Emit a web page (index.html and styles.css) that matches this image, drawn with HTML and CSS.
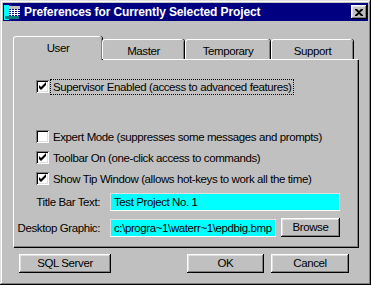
FILE: index.html
```html
<!DOCTYPE html>
<html lang="en">
<head>
    <meta charset="UTF-8">
    <title>Preferences for Currently Selected Project</title>
    <link rel="stylesheet" href="styles.css">
</head>
<body>
    <div class="window">
        <div class="titlebar">
            <svg class="app-icon" width="16" height="16" viewBox="0 0 16 16">
                <rect x="0" y="0" width="16" height="16" fill="#000080"/>
                <rect x="0" y="1" width="5" height="15" fill="#00ffff"/>
                <rect x="5" y="2" width="11" height="3" fill="#c0c0c0"/>
                <rect x="5" y="6" width="11" height="1" fill="#ffffff"/>
                <rect x="5" y="8" width="11" height="1" fill="#ffffff"/>
                <rect x="5" y="10" width="11" height="1" fill="#ffffff"/>
                <rect x="7" y="5" width="1" height="7" fill="#ffffff"/>
                <rect x="10" y="5" width="1" height="7" fill="#ffffff"/>
                <rect x="13" y="5" width="1" height="7" fill="#ffffff"/>
                <rect x="1" y="12" width="14" height="3" fill="#008080"/>
            </svg>
            <span class="title">Preferences for Currently Selected Project</span>
            <div class="close">
                <svg width="8" height="7" viewBox="0 0 8 7">
                    <path d="M0 0h2l2 2 2-2h2v1l-3 2.5 3 2.5v1h-2l-2-2-2 2h-2v-1l3-2.5-3-2.5z" fill="#000"/>
                </svg>
            </div>
        </div>

        <div class="content">
            <div class="tabs">
                <div class="tab active">User</div>
                <div class="tab master">Master</div>
                <div class="tab temporary">Temporary</div>
                <div class="tab support">Support</div>
            </div>

            <div class="panel">
                <div class="check supervisor">
                    <span class="box checked"></span>
                    <span class="label focus">Supervisor Enabled (access to advanced features)</span>
                </div>
                <div class="check expert">
                    <span class="box"></span>
                    <span class="label">Expert Mode (suppresses some messages and prompts)</span>
                </div>
                <div class="check">
                    <span class="box checked"></span>
                    <span class="label">Toolbar On (one-click access to commands)</span>
                </div>
                <div class="check">
                    <span class="box checked"></span>
                    <span class="label">Show Tip Window (allows hot-keys to work all the time)</span>
                </div>

                <div class="field first">
                    <span class="field-label">Title Bar Text:</span>
                    <div class="input wide">Test Project No. 1</div>
                </div>
                <div class="field">
                    <span class="field-label">Desktop Graphic:</span>
                    <div class="input short">c:\progra~1\waterr~1\epdbig.bmp</div>
                    <div class="btn browse">Browse</div>
                </div>
            </div>

            <div class="actions">
                <div class="btn sql">SQL Server</div>
                <div class="btn ok">OK</div>
                <div class="btn cancel">Cancel</div>
            </div>
        </div>
    </div>
</body>
</html>
```

FILE: styles.css
```css
body {
    margin: 0;
    padding: 0;
    background-color: #c0c0c0;
    font-family: "Liberation Sans", Arial, sans-serif;
    font-size: 11.5px;
    letter-spacing: -0.4px;
    color: #000;
}
.window {
    width: 371px;
    height: 285px;
    box-sizing: border-box;
    padding: 3px;
    background-color: #c0c0c0;
    box-shadow: inset -1px -1px #000, inset 1px 1px #dfdfdf,
                inset -2px -2px #808080, inset 2px 2px #fff;
}
.titlebar {
    height: 18px;
    background-color: #000080;
    display: flex;
    align-items: center;
    padding: 0 1px 0 1px;
}
.app-icon {
    flex: none;
}
.title {
    margin-left: 4px;
    color: #fff;
    font-weight: bold;
    font-size: 12px;
    letter-spacing: -0.12px;
    white-space: nowrap;
}
.close {
    margin-left: auto;
    width: 16px;
    height: 14px;
    box-sizing: border-box;
    background-color: #c0c0c0;
    display: flex;
    align-items: center;
    justify-content: center;
    box-shadow: inset -1px -1px #000, inset 1px 1px #fff,
                inset -2px -2px #808080, inset 2px 2px #dfdfdf;
}
.content {
    padding: 15px 0 0 10px;
}
.tabs {
    display: flex;
    align-items: flex-end;
    height: 23px;
    position: relative;
    z-index: 1;
}
.tab {
    box-sizing: border-box;
    height: 20px;
    text-align: center;
    line-height: 19px;
    padding-top: 2px;
    background-color: #c0c0c0;
    border-top: 1px solid #fff;
    border-left: 1px solid #fff;
    border-radius: 3px 3px 0 0;
    box-shadow: inset -1px 0 #808080, 1px 0 #000;
}
.tab.active {
    width: 89px;
    height: 24px;
    margin-bottom: -1px;
    padding-top: 0;
    line-height: 22px;
}
.tab.master {
    width: 82px;
}
.tab.temporary {
    width: 85px;
    margin-left: 1px;
}
.tab.support {
    width: 82px;
    margin-left: 1px;
}
.panel {
    width: 345px;
    height: 188px;
    box-sizing: border-box;
    padding-top: 16px;
    border-top: 1px solid #fff;
    border-left: 1px solid #fff;
    box-shadow: inset -1px -1px #808080, 1px 1px #000;
}
.check {
    display: flex;
    align-items: center;
    height: 21px;
    margin-left: 22px;
}
.check.expert {
    margin-top: 29px;
}
.box {
    flex: none;
    width: 13px;
    height: 13px;
    box-sizing: border-box;
    background-color: #fff;
    box-shadow: inset 1px 1px #808080, inset -1px -1px #fff,
                inset 2px 2px #000, inset -2px -2px #dfdfdf;
}
.box.checked {
    background: #fff url("data:image/svg+xml,%3Csvg xmlns='http://www.w3.org/2000/svg' width='13' height='13'%3E%3Cpath d='M3 5v3l2 2 5-5V2L5 7z' fill='%23000'/%3E%3C/svg%3E") no-repeat;
}
.label {
    margin-left: 2px;
    padding: 1px 2px;
    white-space: nowrap;
}
.focus {
    outline: 1px dotted #000;
}
.field {
    display: flex;
    align-items: center;
    margin-top: 7px;
}
.field.first {
    margin-top: 4px;
}
.field-label {
    width: 86px;
    text-align: right;
    margin-right: 10px;
    white-space: nowrap;
}
.input {
    box-sizing: border-box;
    height: 18px;
    line-height: 16px;
    padding-left: 3px;
    background-color: #00ffff;
    border: 1px solid #fff;
    border-top-color: #dfdfdf;
    border-left-color: #dfdfdf;
    white-space: nowrap;
    overflow: hidden;
}
.input.wide {
    width: 230px;
}
.input.short {
    width: 166px;
}
.btn {
    box-sizing: border-box;
    height: 19px;
    text-align: center;
    line-height: 19px;
    background-color: #c0c0c0;
    box-shadow: inset -1px -1px #000, inset 1px 1px #fff,
                inset -2px -2px #808080, inset 2px 2px #dfdfdf;
}
.browse {
    width: 59px;
    margin-left: 5px;
}
.actions {
    display: flex;
    margin-top: 7px;
    padding-left: 6px;
}
.sql {
    width: 92px;
}
.ok {
    width: 77px;
    margin-left: 76px;
}
.cancel {
    width: 78px;
    margin-left: 7px;
}
```
